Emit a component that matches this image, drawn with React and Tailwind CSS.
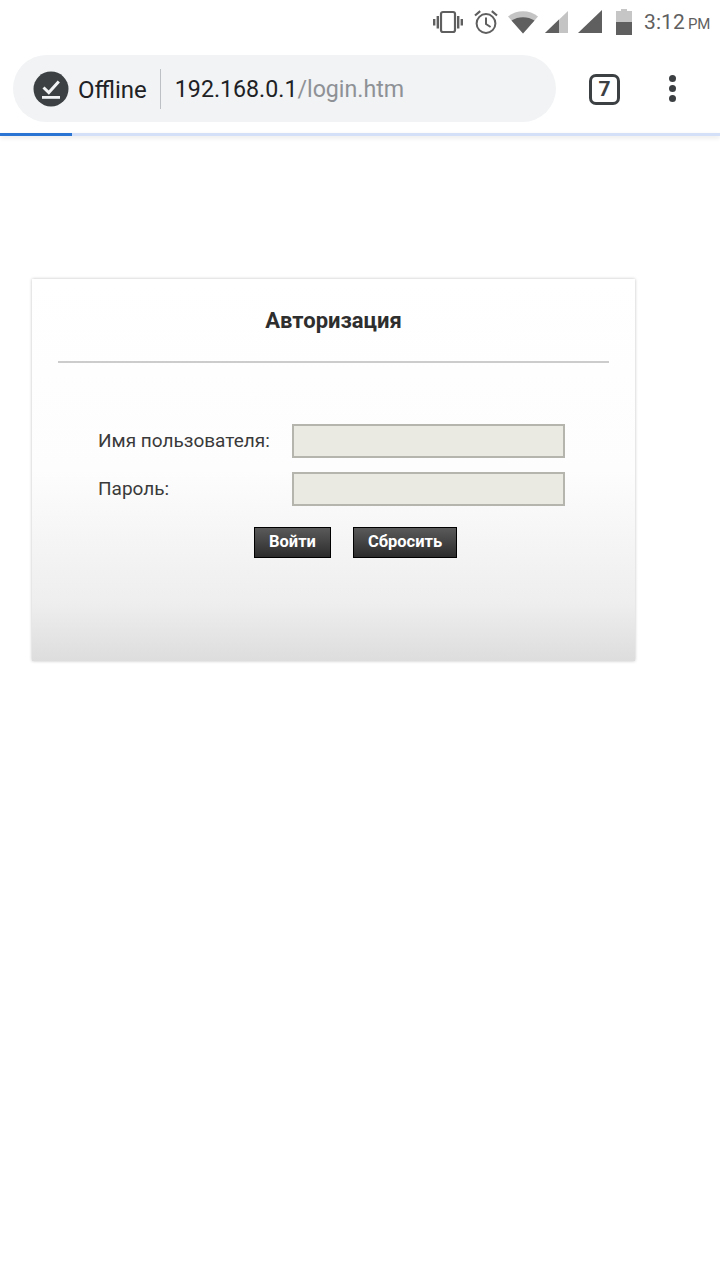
export default function App() {
  return (
    <div className="w-[720px] h-[1280px] bg-white overflow-hidden font-['Roboto',sans-serif]">
      {/* Status bar */}
      <div className="h-[44px] flex items-center pl-[432px] text-[#5f5f5f]">
        <svg width="32" height="24" viewBox="0 0 32 24" fill="none" className="mr-[9px]">
          <rect x="9" y="2" width="14" height="20" rx="2" stroke="#5f5f5f" strokeWidth="2.2" />
          <rect x="1" y="9" width="2.4" height="6.5" fill="#5f5f5f" />
          <rect x="4.6" y="6" width="2.4" height="12.5" fill="#5f5f5f" />
          <rect x="25" y="6" width="2.4" height="12.5" fill="#5f5f5f" />
          <rect x="28.6" y="9" width="2.4" height="6.5" fill="#5f5f5f" />
        </svg>
        <svg width="26" height="26" viewBox="0 0 26 26" fill="none" className="mr-[8px]">
          <circle cx="13" cy="14.5" r="9.4" stroke="#5f5f5f" strokeWidth="2" />
          <path d="M13 8.5V15l4.6 3" stroke="#5f5f5f" strokeWidth="2" />
          <path d="M2 6.5 7.2 2.2M24 6.5 18.8 2.2" stroke="#5f5f5f" strokeWidth="2.2" />
        </svg>
        <svg width="32" height="24" viewBox="0 0 32 24" className="mr-[5px]">
          <path d="M1 6.5C9.5-.5 22.500-.5 31 6.500L16 23.500Z" fill="#c4c4c4" />
          <path d="M4.500 10.500C11 6 21 6 27.500 10.500L16 23.500Z" fill="#5f5f5f" />
        </svg>
        <svg width="24" height="24" viewBox="0 0 24 24" className="mr-[10px]">
          <path d="M1 23 24 1V23Z" fill="#c4c4c4" />
          <path d="M1 23 15 9.600V23Z" fill="#5f5f5f" />
        </svg>
        <svg width="24" height="24" viewBox="0 0 24 24" className="mr-[14px]">
          <path d="M0 23 24 0V23Z" fill="#5f5f5f" />
        </svg>
        <svg width="16" height="26" viewBox="0 0 16 26" className="mr-[12px]">
          <path d="M5 0H11V2H16V26H0V2H5Z" fill="#c6c6c6" />
          <rect x="0" y="13" width="16" height="13" fill="#5f5f5f" />
        </svg>
        <span className="text-[21px] leading-none tracking-[0.1px] mr-[3px]">3:12</span>
        <span className="text-[15px] leading-none mt-[4px]">PM</span>
      </div>

      {/* Toolbar */}
      <div className="h-[89px] flex items-start pt-[11px] pl-[13px]">
        <div className="w-[543px] h-[67px] rounded-full bg-[#f1f3f4] flex items-center pl-[20px]">
          <svg width="36" height="36" viewBox="0 0 36 36" className="shrink-0">
            <circle cx="18" cy="18" r="17.500" fill="#3c4043" />
            <path d="M10.500 16.500 15.800 21.500 25.800 10.500" fill="none" stroke="#f1f3f4" strokeWidth="3" />
            <rect x="9" y="25" width="18" height="2.800" fill="#f1f3f4" />
          </svg>
          <span className="ml-[9px] pt-[2px] text-[24px] leading-none text-[#202124]">Offline</span>
          <div className="w-px h-[40px] bg-[#bdc1c6] ml-[13px]" />
          <span className="ml-[14px] pt-[2px] text-[23.200px] leading-none text-[#202124]">
            192.168.0.1<span className="text-[#8e9196]">/login.htm</span>
          </span>
        </div>
        <div className="ml-[33px] mt-[19px] w-[31px] h-[31px] rounded-[7px] border-[3px] border-[#3c4043] flex items-center justify-center text-[#3c4043] text-[21px] font-bold leading-none">
          7
        </div>
        <div className="ml-[49px] mt-[20px] flex flex-col gap-[3px]">
          <div className="w-[7px] h-[7px] rounded-full bg-[#3c4043]" />
          <div className="w-[7px] h-[7px] rounded-full bg-[#3c4043]" />
          <div className="w-[7px] h-[7px] rounded-full bg-[#3c4043]" />
        </div>
      </div>

      {/* Progress bar */}
      <div className="h-[3px] bg-[#d4e0f8] shadow-[0_2px_4px_rgba(0,0,0,0.10)]">
        <div className="w-[72px] h-full bg-[#2a75d3]" />
      </div>

      {/* Login card */}
      <div className="mt-[143px] ml-[32px] w-[603px] h-[382px] bg-[linear-gradient(to_bottom,#ffffff_0%,#fdfdfd_50%,#eeeeee_85%,#dddddd_100%)] shadow-[0_0_3px_rgba(0,0,0,0.25)] px-[26px]">
        <div className="h-[84px] pt-[2px] flex items-center justify-center border-b-2 border-[#cccccc] text-[22px] font-bold text-[#2e2e2e] leading-none">
          Авторизация
        </div>
        <div className="mt-[61px] ml-[40px] flex items-center h-[34px]">
          <span className="w-[194px] pb-[2px] text-[19px] text-[#3a3a3a] leading-none">Имя пользователя:</span>
          <div className="w-[273px] h-[34px] bg-[#eaeae2] border-2 border-[#b5b5ae]" />
        </div>
        <div className="mt-[14px] ml-[40px] flex items-center h-[34px]">
          <span className="w-[194px] pb-[2px] text-[19px] text-[#3a3a3a] leading-none">Пароль:</span>
          <div className="w-[273px] h-[34px] bg-[#eaeae2] border-2 border-[#b5b5ae]" />
        </div>
        <div className="mt-[21px] ml-[196px] flex gap-[22px]">
          <div className="w-[77px] h-[31px] border border-black bg-[linear-gradient(to_bottom,#5a5a5a,#2c2c2c)] flex items-center justify-center text-white text-[16.500px] font-bold leading-none">
            Войти
          </div>
          <div className="w-[104px] h-[31px] border border-black bg-[linear-gradient(to_bottom,#5a5a5a,#2c2c2c)] flex items-center justify-center text-white text-[16.500px] font-bold leading-none">
            Сбросить
          </div>
        </div>
      </div>
    </div>
  );
}
